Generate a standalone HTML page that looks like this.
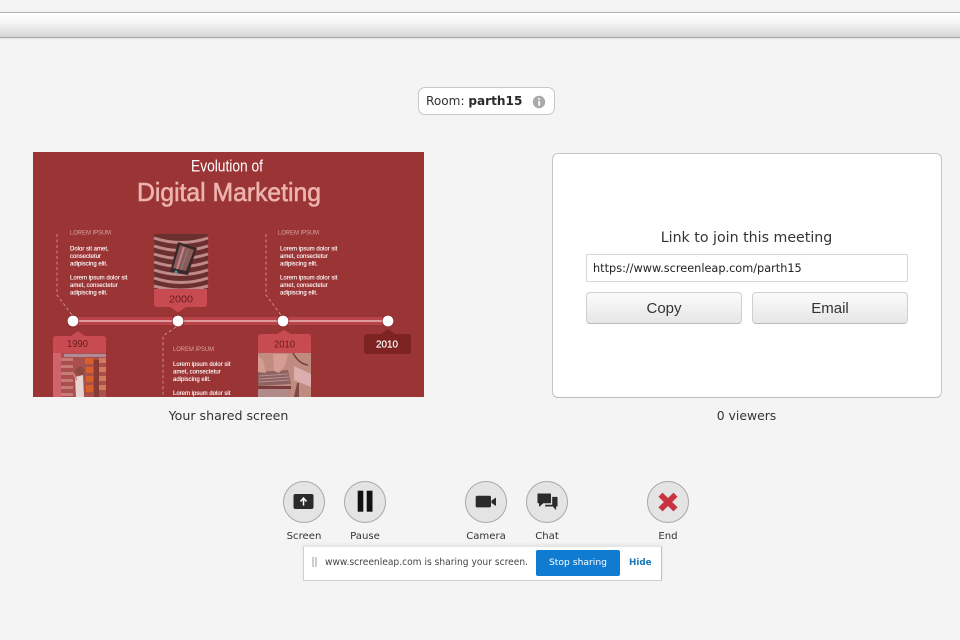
<!DOCTYPE html>
<html><head><meta charset="utf-8"><title>Screenleap</title>
<style>
html,body{margin:0;padding:0;width:960px;height:640px;overflow:hidden;background:#f4f4f4;font-family:"DejaVu Sans","Liberation Sans",sans-serif;color:#333}
.a{position:absolute}
.t{position:absolute;white-space:nowrap;text-align:center}
.btn{position:absolute;top:292px;width:154px;height:30px;border:1px solid #cfcfcf;border-bottom:1px solid #bbb;border-radius:4px;background:linear-gradient(#fbfbfb,#e6e6e6);font:15px/32px "Liberation Sans",sans-serif;text-align:center;color:#333}
.c{position:absolute;top:481px;width:40px;height:40px;border:1px solid #a9a9a9;border-radius:50%;background:#e4e4e4}
.c svg{position:absolute;left:0;top:0}
.l{position:absolute;top:530px;width:80px;text-align:center;font-size:10.1px;line-height:14px;color:#333}
</style></head><body>
<div class="a" style="left:0;top:12px;width:960px;height:26px;box-sizing:border-box;border-top:1px solid #b4b4b4;border-bottom:1px solid #a8a8a8;background:linear-gradient(#fff 0%,#f8f8f8 35%,#d6d6d6 100%)"></div>
<div class="a" style="left:0;top:38px;width:960px;height:3px;background:linear-gradient(#e8e8e8,#f4f4f4)"></div>

<div class="a" style="left:418px;top:87px;width:135px;height:26px;border:1px solid #c8c8c8;border-radius:7px;background:#fff"></div>
<div class="t" style="left:426px;top:93px;font-size:12.1px;line-height:16px;color:#333">Room: <b style="color:#2a2a2a">parth15</b></div>
<svg class="a" style="left:532px;top:95px" width="14" height="14"><circle cx="7" cy="7" r="6.2" fill="#a9a9a9"/><rect x="6" y="6" width="2.2" height="4.8" fill="#eee"/><rect x="6" y="3.2" width="2.2" height="1.8" fill="#eee"/></svg>

<svg class="a" style="left:33px;top:152px;filter:blur(.35px)" width="391" height="245" viewBox="33 152 391 245">
<rect x="33" y="152" width="391" height="245" fill="#9b3434"/>
<text x="191" y="171.500" textLength="72" lengthAdjust="spacingAndGlyphs" font-family="Liberation Sans" font-size="16.500" fill="#fff">Evolution of</text>
<text x="137" y="201" textLength="184" lengthAdjust="spacingAndGlyphs" font-family="Liberation Sans" font-size="26" fill="#edb3ae" stroke="#edb3ae" stroke-width=".6">Digital Marketing</text>
<g font-family="Liberation Sans" font-size="6.200" fill="#dba5a3">
<text x="70" y="234.500" textLength="41" lengthAdjust="spacingAndGlyphs">LOREM IPSUM</text><text x="278" y="234.500" textLength="41" lengthAdjust="spacingAndGlyphs">LOREM IPSUM</text><text x="173" y="351" textLength="41" lengthAdjust="spacingAndGlyphs">LOREM IPSUM</text></g>
<g font-family="Liberation Sans" font-size="6" fill="#fff" stroke="#fff" stroke-width=".12">
<text x="70" y="250.500">Dolor sit amet,</text><text x="70" y="258">consectetur</text><text x="70" y="265.500">adipiscing elit.</text>
<text x="70" y="279.500">Lorem ipsum dolor sit</text><text x="70" y="287">amet, consectetur</text><text x="70" y="294.500">adipiscing elit.</text>
<text x="280" y="250.500">Lorem ipsum dolor sit</text><text x="280" y="258">amet, consectetur</text><text x="280" y="265.500">adipiscing elit.</text>
<text x="280" y="279.500">Lorem ipsum dolor sit</text><text x="280" y="287">amet, consectetur</text><text x="280" y="294.500">adipiscing elit.</text>
<text x="173" y="366">Lorem ipsum dolor sit</text><text x="173" y="373.500">amet, consectetur</text><text x="173" y="381">adipiscing elit.</text>
<text x="173" y="395">Lorem ipsum dolor sit</text></g>
<g fill="none" stroke="#d99d9b" stroke-width="0.800" stroke-dasharray="3 2.500">
<path d="M57 234V295L72 315"/><path d="M266 234V295L281 315"/><path d="M176 327L163 336V397"/></g>
<rect x="73" y="317" width="315" height="8" fill="#b8444a"/>
<rect x="73" y="320" width="315" height="2" fill="#dc9a9a"/>
<g fill="#fff" stroke="#8a2626" stroke-width=".8"><circle cx="73" cy="321" r="5.800"/><circle cx="178" cy="321" r="5.800"/><circle cx="283" cy="321" r="5.800"/><circle cx="388" cy="321" r="5.800"/></g>

<!-- 2000 image -->
<rect x="154" y="234" width="54" height="56" fill="#6b2f30"/>
<g stroke="#c08a88" stroke-width="3" fill="none"><path d="M154 238q27 9 54 0"/><path d="M154 246q27 9 54 0"/><path d="M154 254q27 9 54 0"/><path d="M154 262q27 9 54 0"/><path d="M154 270q27 9 54 0"/><path d="M154 278q27 9 54 0"/><path d="M154 286q27 8 54 0"/></g>
<path d="M178 242L197 248L188 275L170 272Z" fill="#3a2729"/>
<path d="M180 245L194 250L186 271L173 268Z" fill="#8a5a58"/>
<path d="M184 247L177 269" stroke="#c4848a" stroke-width="2"/>
<path d="M188 250L181 270" stroke="#6e8a86" stroke-width="1"/>
<circle cx="176" cy="272" r="1.500" fill="#4f9aa0"/>
<path d="M154 289H207V304Q207 307 204 307H186L178 312.500L170 307H157Q154 307 154 304Z" fill="#c74b50"/>
<text x="169" y="302.500" textLength="24" lengthAdjust="spacingAndGlyphs" font-family="Liberation Sans" font-size="10.500" fill="#6a1c20">2000</text>

<!-- 1990 -->
<path d="M53 339Q53 336 56 336H71L78 331L85 336H103Q106 336 106 339V354H53Z" fill="#c74b50"/>
<text x="67" y="347" textLength="21" lengthAdjust="spacingAndGlyphs" font-family="Liberation Sans" font-size="10.500" fill="#6a1c20">1990</text>
<rect x="53" y="353" width="53" height="44" fill="#a9504c"/>
<rect x="53" y="353" width="8" height="44" fill="#d0646c"/>
<g fill="#c77a78"><rect x="61" y="358" width="12" height="3"/><rect x="61" y="365" width="12" height="3"/><rect x="61" y="372" width="11" height="3"/><rect x="61" y="379" width="12" height="3"/><rect x="61" y="386" width="12" height="3"/><rect x="61" y="393" width="12" height="3"/></g>
<rect x="64" y="354" width="42" height="3" fill="#b28a98"/>
<g fill="#d8602a"><rect x="85" y="358" width="8" height="6"/><rect x="86" y="367" width="7" height="6"/><rect x="86" y="376" width="7" height="6"/><rect x="86" y="385" width="7" height="7"/></g>
<g fill="#8a3a34"><rect x="94" y="360" width="5" height="37"/></g>
<g fill="#cf7c5e"><rect x="99" y="358" width="7" height="5"/><rect x="99" y="367" width="7" height="5"/><rect x="99" y="376" width="7" height="5"/><rect x="99" y="385" width="7" height="5"/></g>
<path d="M75 377L83 375L84 397H76Z" fill="#e8d4d2"/>
<path d="M72 372L77 380" stroke="#c98a80" stroke-width="1.500"/>
<circle cx="80" cy="371" r="4.500" fill="#8e4a3e"/>

<!-- 2010 -->
<path d="M258 337Q258 334 261 334H277L284 330L291 334H308Q311 334 311 337V354H258Z" fill="#c74b50"/>
<text x="274" y="347.500" textLength="21" lengthAdjust="spacingAndGlyphs" font-family="Liberation Sans" font-size="10.500" fill="#6a1c20">2010</text>
<rect x="258" y="353" width="53" height="44" fill="#c08c80"/>
<path d="M258 372L288 370L291 384L258 386Z" fill="#8e6260"/>
<g stroke="#b89090" stroke-width="1"><path d="M259 376L288 374M259 379L289 377M259 382L289 380"/></g>
<path d="M273 354H288L285 366L279 373L274 371Z" fill="#d69c94"/>
<path d="M258 356L263 360L266 373L258 372Z" fill="#d69c94"/>
<path d="M294 366L311 374V387L294 380Z" fill="#dcaeae"/>
<path d="M293 353Q299 364 308 365" stroke="#6e4240" stroke-width="1.500" fill="none"/>
<path d="M258 386H291V389H258Z" fill="#7a3c3c"/>
<path d="M258 389H290V397H258Z" fill="#b08a88"/>
<path d="M294 397L297 383H299V397Z" fill="#7e4a44"/>

<!-- 2010 dark -->
<path d="M364 337Q364 334 367 334H381L388 329L395 334H408Q411 334 411 337V351Q411 354 408 354H367Q364 354 364 351Z" fill="#7e2222"/>
<text x="376" y="347.500" textLength="22" lengthAdjust="spacingAndGlyphs" font-family="Liberation Sans" font-size="10.500" fill="#fff" stroke="#fff" stroke-width=".2">2010</text>
</svg>

<div class="t" style="left:33px;width:391px;top:408px;font-size:12.600px;line-height:16px;color:#333">Your shared screen</div>

<div class="a" style="left:552px;top:153px;width:388px;height:243px;border:1px solid #c6c6c6;border-bottom-color:#bbb;border-radius:6px;background:#fff"></div>
<div class="t" style="left:552px;width:389px;top:229px;font-size:14.200px;line-height:18px;color:#333">Link to join this meeting</div>
<div class="a" style="left:586px;top:254px;width:314px;height:26px;border:1px solid #d6d6d6;border-radius:2px;background:#fff;padding-left:6px;font-size:11.300px;line-height:27px;color:#222;white-space:nowrap">https://www.screenleap.com/parth15</div>
<div class="btn" style="left:586px">Copy</div>
<div class="btn" style="left:752px">Email</div>
<div class="t" style="left:552px;width:389px;top:408px;font-size:12.400px;line-height:16px;color:#333">0 viewers</div>

<div class="c" style="left:283px"><svg width="40" height="40"><rect x="9.500" y="12" width="20" height="15" rx="2" fill="#2b2b2b"/><path d="M19.500 23.500V16.500M16.500 19.500L19.500 16L22.500 19.500" stroke="#fff" stroke-width="1.500" fill="none"/></svg></div>
<div class="c" style="left:344px"><svg width="40" height="40"><rect x="12.700" y="8.700" width="5.600" height="21" fill="#111"/><rect x="21.700" y="8.700" width="5.800" height="21" fill="#111"/></svg></div>
<div class="c" style="left:465px"><svg width="40" height="40"><rect x="9.700" y="13.700" width="15.300" height="11.700" rx="1.500" fill="#2b2b2b"/><path d="M25.500 18.500L30 15.500V24L25.500 21Z" fill="#2b2b2b"/></svg></div>
<div class="c" style="left:526px"><svg width="40" height="40"><path d="M11 12H23.500V20.700H16L12.500 24V20.700H11Z" fill="#2b2b2b" stroke="#2b2b2b" stroke-linejoin="round"/><path d="M25.500 15.200H30.200V24.200H28.800V27.500L26 24.200H18.500V23H25.500Z" fill="#2b2b2b" stroke="#2b2b2b" stroke-width=".6" stroke-linejoin="round"/></svg></div>
<div class="c" style="left:647px"><svg width="40" height="40"><path d="M12.500 12.700L27.500 27.300M27.500 12.700L12.500 27.300" stroke="#c8333f" stroke-width="5.800"/></svg></div>
<div class="l" style="left:264px">Screen</div>
<div class="l" style="left:325px">Pause</div>
<div class="l" style="left:446px">Camera</div>
<div class="l" style="left:507px">Chat</div>
<div class="l" style="left:628px">End</div>

<div class="a" style="left:303px;top:546px;width:357px;height:33px;background:#fff;border:1px solid #d0d0d0;border-top-color:#e4e4e4;border-right:1px solid #c0c0c0;box-shadow:0 -2px 3px rgba(0,0,0,.06)"></div>
<div class="a" style="left:312px;top:557px;width:1.500px;height:10px;background:#ccc"></div>
<div class="a" style="left:315px;top:557px;width:1.500px;height:10px;background:#ccc"></div>
<div class="t" style="left:325px;top:556px;font-size:9.800px;line-height:14px;color:#444;transform:scaleX(.93);transform-origin:left center">www.screenleap.com is sharing your screen.</div>
<div class="a" style="left:536px;top:550px;width:84px;height:26px;border-radius:2px;background:#0f7bd1;color:#fff;font-size:9.200px;line-height:26px;text-align:center">Stop sharing</div>
<div class="t" style="left:629px;top:556px;font-size:8.800px;line-height:14px;font-weight:bold;color:#1a76b8">Hide</div>
</body></html>
